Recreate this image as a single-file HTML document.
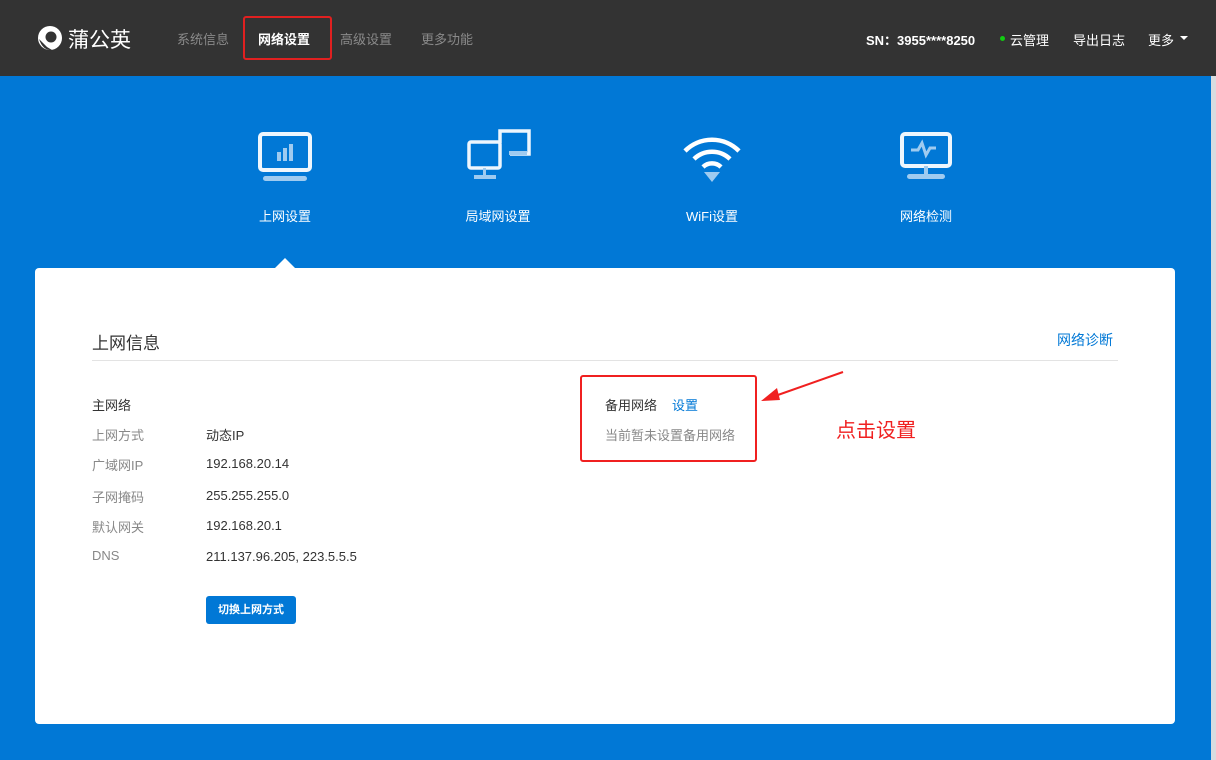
<!DOCTYPE html>
<html><head><meta charset="utf-8"><style>
*{margin:0;padding:0;box-sizing:border-box}
body{width:1216px;height:760px;overflow:hidden;background:#0178d6;font-family:"Liberation Sans","Noto Sans CJK SC",sans-serif;position:relative}
.hd{position:absolute;left:0;top:0;width:1216px;height:76px;background:#333}
.abs{position:absolute;white-space:nowrap}
.nav{font-size:13px;color:#8a8a8a;top:29px}
.rt{font-size:13px;color:#fff;top:30px}
.ico{position:absolute;top:128px}
.lbl{position:absolute;top:206px;font-size:13px;color:#fff;transform:translateX(-50%)}
.card{position:absolute;left:35px;top:268px;width:1140px;height:456px;background:#fff;border-radius:4px}
.k{font-size:13px;color:#888;left:92px}
.v{font-size:13px;color:#333;left:206px}
</style></head><body>
<div class="hd"></div>
<svg class="abs" style="left:37px;top:25px" width="26" height="26" viewBox="0 0 26 26"><circle cx="13" cy="13" r="12" fill="#fff"/><circle cx="14" cy="12" r="5.5" fill="#333"/><path d="M2 14 Q6 26 15 25 L10 22 Z" fill="#333"/></svg>
<div class="abs" style="left:68px;top:24px;font-size:21px;color:#fff">蒲公英</div>
<div class="abs nav" style="left:177px">系统信息</div>
<div class="abs nav" style="left:258px;color:#fff;font-weight:bold">网络设置</div>
<div class="abs" style="left:243px;top:16px;width:89px;height:44px;border:2px solid #e02020;border-radius:3px"></div>
<div class="abs nav" style="left:340px">高级设置</div>
<div class="abs nav" style="left:421px">更多功能</div>
<div class="abs rt" style="left:866px;font-weight:bold">SN：3955****8250</div>
<div class="abs" style="left:1000px;top:36px;width:5px;height:5px;border-radius:50%;background:#1c1"></div>
<div class="abs rt" style="left:1010px">云管理</div>
<div class="abs rt" style="left:1073px">导出日志</div>
<div class="abs rt" style="left:1148px">更多</div>
<div class="abs" style="left:1180px;top:36px;border-left:4px solid transparent;border-right:4px solid transparent;border-top:4px solid #fff"></div>

<svg class="ico" style="left:255px" width="60" height="60" viewBox="0 0 60 60"><rect x="5" y="6" width="50" height="36" rx="3" fill="none" stroke="#eef6fd" stroke-width="4"/><rect x="22" y="24" width="4" height="9" fill="#9fcbf0"/><rect x="28" y="20" width="4" height="13" fill="#9fcbf0"/><rect x="34" y="16" width="4" height="17" fill="#9fcbf0"/><rect x="8" y="48" width="44" height="5" rx="2.5" fill="#9fcbf0"/></svg>
<svg class="ico" style="left:462px" width="72" height="60" viewBox="0 0 72 60"><path d="M38 15 V3 H67 V26 H48" fill="none" stroke="#eef6fd" stroke-width="3.5"/><rect x="47" y="23" width="18" height="4" fill="#9fcbf0"/><rect x="7" y="14" width="31" height="26" rx="2" fill="none" stroke="#eef6fd" stroke-width="3.5"/><rect x="21" y="40" width="3" height="7" fill="#9fcbf0"/><rect x="12" y="47" width="22" height="4" fill="#9fcbf0"/></svg>
<svg class="ico" style="left:680px" width="64" height="60" viewBox="0 0 64 60"><path d="M5 23 A38 38 0 0 1 59 23" fill="none" stroke="#fff" stroke-width="4.5"/><path d="M14 31 A26 26 0 0 1 50 31" fill="none" stroke="#fff" stroke-width="4.5"/><path d="M23 39 A13 13 0 0 1 41 39" fill="none" stroke="#fff" stroke-width="4.5"/><path d="M24 44 L40 44 L32 54 Z" fill="#9fcbf0"/></svg>
<svg class="ico" style="left:896px" width="60" height="60" viewBox="0 0 60 60"><rect x="6" y="6" width="48" height="32" rx="3" fill="none" stroke="#eef6fd" stroke-width="4"/><path d="M15 22 H22 L26 15 L30 27 L34 20 H40" fill="none" stroke="#9fcbf0" stroke-width="3"/><rect x="28" y="38" width="4" height="9" fill="#9fcbf0"/><rect x="11" y="46" width="38" height="5" rx="2.5" fill="#9fcbf0"/></svg>
<div class="lbl" style="left:285px">上网设置</div>
<div class="lbl" style="left:498px">局域网设置</div>
<div class="lbl" style="left:712px">WiFi设置</div>
<div class="lbl" style="left:926px">网络检测</div>
<div class="abs" style="left:274px;top:258px;border-left:11px solid transparent;border-right:11px solid transparent;border-bottom:11px solid #fff"></div>

<div class="card"></div>
<div class="abs" style="left:92px;top:329px;font-size:17px;color:#333">上网信息</div>
<div class="abs" style="left:1057px;top:330px;font-size:14px;color:#0178d6">网络诊断</div>
<div class="abs" style="left:92px;top:360px;width:1026px;height:1px;background:#e3e3e3"></div>
<div class="abs" style="left:92px;top:395px;font-size:13px;color:#333">主网络</div>
<div class="abs k" style="top:425px">上网方式</div><div class="abs v" style="top:425px">动态IP</div>
<div class="abs k" style="top:455px">广域网IP</div><div class="abs v" style="top:456px">192.168.20.14</div>
<div class="abs k" style="top:487px">子网掩码</div><div class="abs v" style="top:488px">255.255.255.0</div>
<div class="abs k" style="top:517px">默认网关</div><div class="abs v" style="top:518px">192.168.20.1</div>
<div class="abs k" style="top:548px">DNS</div><div class="abs v" style="top:549px">211.137.96.205, 223.5.5.5</div>
<div class="abs" style="left:206px;top:596px;width:90px;height:28px;background:#0178d6;border-radius:3px;color:#fff;font-size:11px;font-weight:bold;text-align:center;line-height:28px">切换上网方式</div>

<div class="abs" style="left:580px;top:375px;width:177px;height:87px;border:2px solid #f02020;border-radius:3px"></div>
<div class="abs" style="left:605px;top:395px;font-size:13px;color:#333">备用网络</div>
<div class="abs" style="left:672px;top:395px;font-size:13px;color:#0178d6">设置</div>
<div class="abs" style="left:605px;top:425px;font-size:13px;color:#888">当前暂未设置备用网络</div>
<svg class="abs" style="left:755px;top:370px" width="95" height="40" viewBox="0 0 95 40"><path d="M88 2 L20 26" stroke="#f02020" stroke-width="2"/><path d="M6 31 L22 18 L25 30 Z" fill="#f02020"/></svg>
<div class="abs" style="left:836px;top:414px;font-size:20px;color:#f02020">点击设置</div>
<div class="abs" style="left:1211px;top:76px;width:5px;height:684px;background:#d8dce0"></div>
</body></html>
